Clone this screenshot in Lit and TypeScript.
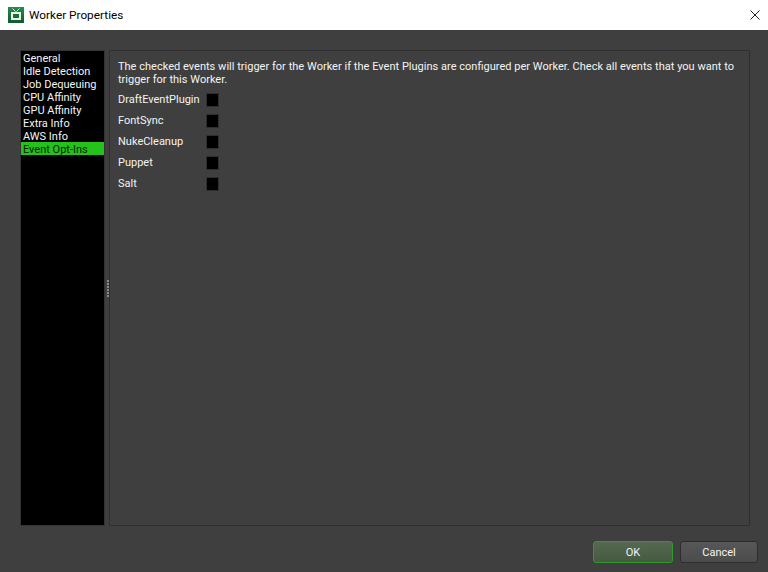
import { LitElement, html, css } from "lit";
import { customElement } from "lit/decorators.js";

@customElement("app-root")
export class AppRoot extends LitElement {
  static styles = css`
    :host { display: flex; flex-direction: column; width: 768px; height: 572px; overflow: hidden; background: #3f3f3f; font-family: Roboto, "Open Sans", sans-serif; font-size: 11px; color: #f4f4f4; }
    .title { height: 30px; background: #fff; color: #000; display: flex; align-items: center; font-size: 11.8px; padding: 0 8px 0 8px; flex: none; }
    .title .logo { width: 16px; height: 16px; margin-right: 5px; flex: none; }
    .title .name { flex: 1; }
    .title .close { width: 10px; height: 10px; flex: none; }
    .main { flex: none; height: 476px; margin: 20px 18px 0 20px; display: flex; }
    .list { width: 83px; background: #000; border: 1px solid #333; display: flex; flex-direction: column; flex: none; }
    .item { height: 13px; line-height: 15px; padding-left: 2px; white-space: nowrap; }
    .item.sel { background: #24c21a; color: #062004; }
    .split { width: 4px; flex: none; display: flex; flex-direction: column; align-items: flex-end; justify-content: center; gap: 1px; }
    .split i { display: block; width: 2px; height: 2px; background: #8a8a8a; }
    .panel { flex: 1; border: 1px solid #2f2f2f; padding: 9px 9px 0 8px; }
    .desc { line-height: 13px; margin-bottom: 3px; word-spacing: 0.12px; }
    .rows { display: grid; grid-template-columns: 88px 13px; grid-auto-rows: 21px; align-items: center; }
    .box { width: 11px; height: 12px; background: #000; border: 1px solid #2f2f2f; }
    .footer { display: flex; justify-content: flex-end; gap: 7px; padding: 15px 10px 0 0; }
    .btn { height: 20px; border-radius: 3px; display: flex; align-items: center; justify-content: center; }
    .ok { width: 78px; background: linear-gradient(#54694f, #465a43); border: 1px solid #2f9a2b; }
    .cancel { width: 76px; background: linear-gradient(#575757, #4c4c4c); border: 1px solid #2d2d2d; }
  `;

  render() {
    const items = ["General", "Idle Detection", "Job Dequeuing", "CPU Affinity", "GPU Affinity", "Extra Info", "AWS Info", "Event Opt-Ins"];
    const events = ["DraftEventPlugin", "FontSync", "NukeCleanup", "Puppet", "Salt"];
    return html`
      <div class="title">
        <svg class="logo" viewBox="0 0 16 16">
          <defs>
            <linearGradient id="g" x1="0" y1="0" x2="0" y2="1">
              <stop offset="0" stop-color="#2a8a4a"/>
              <stop offset="1" stop-color="#0f5a2e"/>
            </linearGradient>
          </defs>
          <rect width="16" height="16" fill="url(#g)"/>
          <path d="M4.5 1.5 7.5 4.5M11.5 1.5 8.5 4.5" stroke="#e8f3ea" stroke-width="1" fill="none"/>
          <rect x="3" y="5" width="10" height="8" fill="#e9f5ec"/>
          <rect x="5" y="7" width="6" height="4" fill="#17703a"/>
        </svg>
        <span class="name">Worker Properties</span>
        <svg class="close" viewBox="0 0 10 10"><path d="M.5.5 9.5 9.5M9.5.5 .5 9.5" stroke="#222" fill="none"/></svg>
      </div>
      <div class="main">
        <div class="list">
          ${items.map((t, i) => html`<div class="item ${i === 7 ? "sel" : ""}">${t}</div>`)}
        </div>
        <div class="split">${[0, 1, 2, 3, 4, 5].map(() => html`<i></i>`)}</div>
        <div class="panel">
          <div class="desc">The checked events will trigger for the Worker if the Event Plugins are configured per Worker. Check all events that you want to trigger for this Worker.</div>
          <div class="rows">
            ${events.map((e) => html`<span>${e}</span><span class="box"></span>`)}
          </div>
        </div>
      </div>
      <div class="footer">
        <div class="btn ok">OK</div>
        <div class="btn cancel">Cancel</div>
      </div>
    `;
  }
}
